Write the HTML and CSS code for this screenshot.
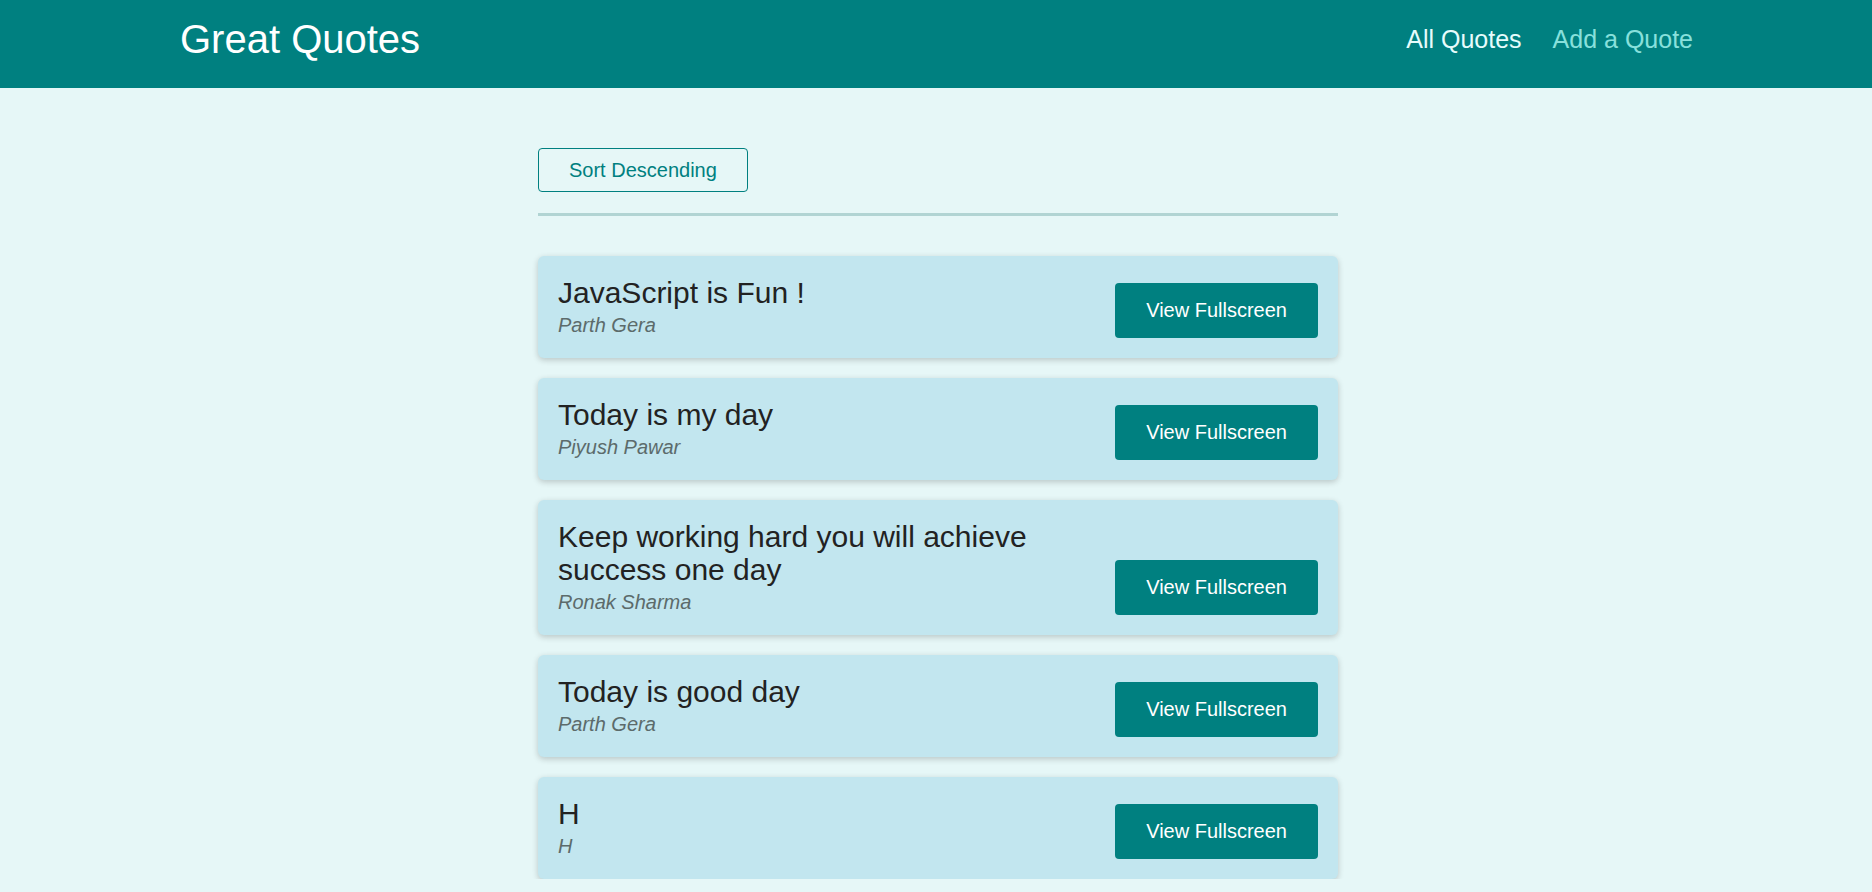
FILE: index.html
```html
<!DOCTYPE html>
<html lang="en">
<head>
<meta charset="utf-8">
<title>Great Quotes</title>
<link rel="stylesheet" href="styles.css">
</head>
<body>
<header class="header">
  <div class="logo">Great Quotes</div>
  <nav class="nav">
    <a class="nav-link active" href="#">All Quotes</a>
    <a class="nav-link" href="#">Add a Quote</a>
  </nav>
</header>
<main class="main">
  <div class="sorting">
    <button class="sort-btn">Sort Descending</button>
  </div>
  <ul class="list">
    <li class="item">
      <figure class="quote">
        <blockquote class="quote-text">JavaScript is Fun !</blockquote>
        <figcaption class="quote-author">Parth Gera</figcaption>
      </figure>
      <a class="btn" href="#">View Fullscreen</a>
    </li>
    <li class="item">
      <figure class="quote">
        <blockquote class="quote-text">Today is my day</blockquote>
        <figcaption class="quote-author">Piyush Pawar</figcaption>
      </figure>
      <a class="btn" href="#">View Fullscreen</a>
    </li>
    <li class="item">
      <figure class="quote">
        <blockquote class="quote-text">Keep working hard you will achieve success one day</blockquote>
        <figcaption class="quote-author">Ronak Sharma</figcaption>
      </figure>
      <a class="btn" href="#">View Fullscreen</a>
    </li>
    <li class="item">
      <figure class="quote">
        <blockquote class="quote-text">Today is good day</blockquote>
        <figcaption class="quote-author">Parth Gera</figcaption>
      </figure>
      <a class="btn" href="#">View Fullscreen</a>
    </li>
    <li class="item">
      <figure class="quote">
        <blockquote class="quote-text">H</blockquote>
        <figcaption class="quote-author">H</figcaption>
      </figure>
      <a class="btn" href="#">View Fullscreen</a>
    </li>
  </ul>
</main>
</body>
</html>
```

FILE: styles.css
```css
* {
  box-sizing: border-box;
}

html, body {
  margin: 0;
  padding: 0;
}

body {
  font-family: "Liberation Sans", Arial, sans-serif;
  background: #e6f7f7;
  color: #222;
}

.header {
  height: 88px;
  background: #008080;
  display: flex;
  align-items: center;
  justify-content: space-between;
  padding: 0 179px 10px 180px;
}

.logo {
  font-size: 40px;
  color: #ffffff;
}

.nav {
  display: flex;
  gap: 31px;
}

.nav-link {
  font-size: 25px;
  color: #88e0dc;
  text-decoration: none;
}

.nav-link.active {
  color: #e6fcfc;
}

.main {
  width: 800px;
  margin: 60px calc(50% - 402px) 0 calc(50% - 398px);
}

.sorting {
  padding-bottom: 21px;
  border-bottom: 3px solid #b1d4d3;
}

.sort-btn {
  font-family: "Liberation Sans", Arial, sans-serif;
  font-size: 20px;
  line-height: 22px;
  padding: 10px 30px;
  background: transparent;
  color: #008080;
  border: 1px solid #008080;
  border-radius: 4px;
  cursor: pointer;
}

.list {
  list-style: none;
  margin: 40px 0 0;
  padding: 0;
  display: flex;
  flex-direction: column;
  gap: 20px;
}

.item {
  display: flex;
  align-items: flex-end;
  justify-content: space-between;
  padding: 20px 20px 21px;
  background: #c2e6ef;
  border-radius: 6px;
  box-shadow: 0 2px 6px rgba(0, 0, 0, 0.2);
}

.quote {
  margin: 0;
  flex: 1;
  min-width: 0;
}

.quote-text {
  margin: 0 0 5px;
  font-size: 30px;
  line-height: 33px;
  color: #222;
}

.quote-author {
  font-size: 20px;
  line-height: 23px;
  font-style: italic;
  color: #5c6b6b;
}

.btn {
  flex-shrink: 0;
  font-size: 20px;
  line-height: 23px;
  padding: 16px 31px;
  margin-bottom: -1px;
  background: #008080;
  color: #ffffff;
  text-decoration: none;
  border-radius: 4px;
}
```
